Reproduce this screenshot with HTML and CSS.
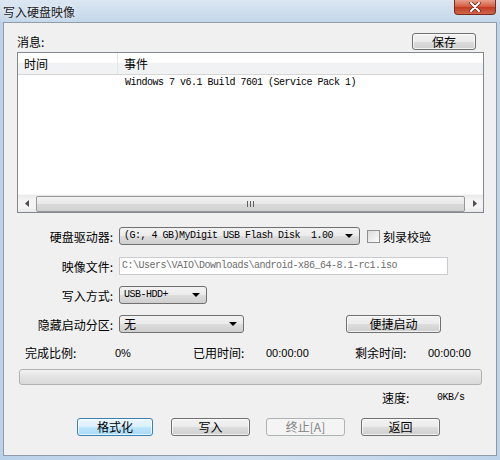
FILE: index.html
```html
<!DOCTYPE html>
<html lang="zh-CN">
<head>
  <meta charset="UTF-8">
  <title>写入硬盘映像</title>
  <link rel="stylesheet" href="styles.css">
</head>
<body>
  <div class="window">
    <div class="titlebar">
      <span class="title">写入硬盘映像</span>
      <span class="close">
        <svg width="14" height="10" viewBox="0 0 14 10">
          <path d="M3 1 L11 9 M11 1 L3 9" stroke="#5a2418" stroke-width="3.4" stroke-linecap="round"/>
          <path d="M3 1 L11 9 M11 1 L3 9" stroke="#fff" stroke-width="2" stroke-linecap="round"/>
        </svg>
      </span>
    </div>

    <div class="panel">
      <div class="log-head">
        <span>消息:</span>
        <button class="btn save">保存</button>
      </div>

      <div class="log">
        <div class="log-cols">
          <div class="col-time">时间</div>
          <div class="col-event">事件</div>
        </div>
        <div class="log-body">
          <div class="log-row">
            <div class="col-time"></div>
            <div class="col-event mono">Windows 7 v6.1 Build 7601 (Service Pack 1)</div>
          </div>
        </div>
        <div class="hscroll">
          <span class="arrow">
            <svg width="4" height="7" viewBox="0 0 4 7"><path d="M4 0 L0 3.5 L4 7 Z" fill="#4d4d4d"/></svg>
          </span>
          <span class="thumb"><span class="grip"></span></span>
          <span class="arrow">
            <svg width="4" height="7" viewBox="0 0 4 7"><path d="M0 0 L4 3.5 L0 7 Z" fill="#4d4d4d"/></svg>
          </span>
        </div>
      </div>

      <div class="form">
        <div class="row">
          <label class="lbl">硬盘驱动器:</label>
          <div class="combo mono drive">(G:, 4 GB)MyDigit USB Flash Disk  1.00<span class="caret"></span></div>
          <span class="check"></span>
          <span class="check-text">刻录校验</span>
        </div>
        <div class="row gap-12">
          <label class="lbl">映像文件:</label>
          <div class="field mono">C:\Users\VAIO\Downloads\android-x86_64-8.1-rc1.iso</div>
        </div>
        <div class="row gap-11">
          <label class="lbl">写入方式:</label>
          <div class="combo mono mode">USB-HDD+<span class="caret"></span></div>
        </div>
        <div class="row gap-11">
          <label class="lbl">隐藏启动分区:</label>
          <div class="combo hide">无<span class="caret"></span></div>
          <button class="btn quick">便捷启动</button>
        </div>
      </div>

      <div class="status">
        <span>完成比例:</span>
        <span class="num">0%</span>
        <span>已用时间:</span>
        <span class="num">00:00:00</span>
        <span>剩余时间:</span>
        <span class="num">00:00:00</span>
      </div>

      <div class="progress"></div>

      <div class="speed">
        <span>速度:</span>
        <span class="mono">0KB/s</span>
      </div>

      <div class="actions">
        <button class="btn focused">格式化</button>
        <button class="btn">写入</button>
        <button class="btn" disabled>终止[A]</button>
        <button class="btn">返回</button>
      </div>
    </div>
  </div>
</body>
</html>
```

FILE: styles.css
```css
body {
  margin: 0;
  padding: 0;
  font-family: "Noto Sans CJK SC", "Liberation Sans", sans-serif;
  font-size: 12px;
  color: #000;
}

.window {
  width: 500px;
  height: 460px;
  background: linear-gradient(90deg, #b9d1ea, #cfdff0 50%, #bcd3ea);
  overflow: hidden;
}

.titlebar {
  height: 22px;
  display: flex;
  justify-content: space-between;
  align-items: flex-start;
  background: linear-gradient(180deg, #dbe7f2, #c3d6e9);
}

.title {
  padding: 4px 0 0 3px;
  line-height: 15px;
  font-size: 12px;
  color: #1a1a1a;
  text-shadow: 0 0 6px #fff;
}

.close {
  width: 40px;
  height: 14px;
  margin-right: 4px;
  display: flex;
  align-items: center;
  justify-content: center;
  border: 1px solid #7d2c1c;
  border-top: none;
  border-radius: 0 0 4px 4px;
  background: linear-gradient(180deg, #e8a08c, #d4573d 50%, #c23b22 51%, #d0654a);
}

.panel {
  margin: 0 3px;
  height: 434px;
  box-sizing: border-box;
  border: 1px solid #8f9ba8;
  background-color: #f0f0f0;
  padding: 10px 12px 0 13px;
}

.mono {
  font-family: "Liberation Mono", monospace;
  font-size: 10px;
  letter-spacing: -0.5px;
  white-space: pre;
}

/* buttons */

.btn {
  height: 18px;
  padding: 0;
  font-family: "Noto Sans CJK SC", sans-serif;
  font-size: 12px;
  line-height: 16px;
  color: #000;
  border: 1px solid #707070;
  border-radius: 3px;
  background: linear-gradient(180deg, #f2f2f2 0%, #ebebeb 50%, #dddddd 51%, #cfcfcf 100%);
  box-shadow: inset 0 0 0 1px rgba(255,255,255,0.7);
}

.btn.focused {
  border-color: #3c7fb1;
  background: linear-gradient(180deg, #eaf6fd 0%, #d9f0fc 50%, #bee6fd 51%, #a7d9f5 100%);
}

.btn:disabled {
  border-color: #adb2b5;
  background: #f4f4f4;
  color: #838383;
  box-shadow: none;
}

/* log */

.log-head {
  height: 17px;
  display: flex;
  justify-content: space-between;
  align-items: center;
}

.save {
  width: 64px;
  height: 17px;
  margin-right: 8px;
}

.log {
  margin-top: 2px;
  height: 161px;
  box-sizing: border-box;
  border: 1px solid #828790;
  background-color: #fff;
  display: flex;
  flex-direction: column;
}

.log-cols {
  height: 21px;
  display: flex;
  border-bottom: 1px solid #d5d5d5;
  background: linear-gradient(180deg, #ffffff 0%, #ffffff 45%, #f1f2f4 46%, #f1f2f4 100%);
  line-height: 21px;
}

.col-time {
  width: 100px;
  padding-left: 6px;
  box-sizing: border-box;
}

.log-cols .col-time {
  border-right: 1px solid #e3e5e8;
}

.col-event {
  padding-left: 6px;
}

.log-body {
  flex: 1;
}

.log-row {
  display: flex;
  height: 16px;
  line-height: 16px;
}

.log-row .col-time {
  width: 101px;
}

.hscroll {
  height: 17px;
  display: flex;
  align-items: center;
  background: linear-gradient(180deg, #e9e9e9, #f4f4f4 30%, #f4f4f4 70%, #e9e9e9);
  border-top: 1px solid #f7f7f7;
}

.arrow {
  width: 17px;
  height: 17px;
  display: flex;
  align-items: center;
  justify-content: center;
}

.thumb {
  flex: 1;
  height: 14px;
  margin: 0 1px;
  border: 1px solid #979797;
  border-radius: 2px;
  background: linear-gradient(180deg, #f3f3f3, #e8e8e8 50%, #d9d9d9 51%, #d2d2d2);
  display: flex;
  justify-content: center;
  align-items: center;
}

.grip {
  width: 7px;
  height: 6px;
  background: repeating-linear-gradient(90deg, #5f5f5f 0 1px, transparent 1px 3px);
}

/* form */

.form {
  margin-top: 14px;
}

.row {
  height: 18px;
  display: flex;
  align-items: center;
  margin-top: 10px;
}

.row:first-child {
  margin-top: 0;
}

.row.gap-12 {
  margin-top: 12px;
}

.row.gap-11 {
  margin-top: 11px;
}

.lbl {
  width: 96px;
  text-align: right;
  margin-right: 6px;
}

.combo {
  position: relative;
  height: 18px;
  box-sizing: border-box;
  border: 1px solid #707070;
  border-radius: 3px;
  background: linear-gradient(180deg, #f2f2f2 0%, #ebebeb 50%, #dddddd 51%, #cfcfcf 100%);
  padding-left: 4px;
  line-height: 16px;
}

.caret {
  position: absolute;
  right: 6px;
  top: 6px;
  width: 0;
  height: 0;
  border-left: 4px solid transparent;
  border-right: 4px solid transparent;
  border-top: 4px solid #000;
}

.drive {
  width: 241px;
}

.mode {
  width: 88px;
}

.hide {
  width: 125px;
}

.check {
  width: 13px;
  height: 13px;
  box-sizing: border-box;
  margin-left: 7px;
  border: 1px solid #8e8f8f;
  background: linear-gradient(135deg, #dcdcdc, #fbfbfb);
}

.check-text {
  margin-left: 3px;
  font-size: 12px;
}

.field {
  width: 329px;
  height: 18px;
  box-sizing: border-box;
  border: 1px solid #c9cbce;
  background-color: #fff;
  color: #6d6d6d;
  padding-left: 2px;
  line-height: 16px;
}

.quick {
  width: 95px;
  margin-left: 102px;
}

/* status */

.status {
  margin-top: 13px;
  height: 14px;
  line-height: 14px;
  padding-left: 8px;
  display: grid;
  grid-template-columns: 90px 78px 73px 89px 73px auto;
}

.num {
  font-family: "Liberation Sans", sans-serif;
  font-size: 11px;
}

.progress {
  margin: 9px 0 0 2px;
  width: 463px;
  height: 16px;
  box-sizing: border-box;
  border: 1px solid #b2b2b2;
  border-radius: 3px;
  background: linear-gradient(180deg, #f2f2f2, #e3e3e3 50%, #dadada);
}

.speed {
  margin-top: 6px;
  height: 14px;
  line-height: 14px;
  padding-left: 365px;
  display: grid;
  grid-template-columns: 55px auto;
}

.actions {
  margin-top: 13px;
  padding-left: 60px;
  display: flex;
  gap: 16px;
}

.actions .btn {
  width: 79px;
}

.actions .btn.focused {
  width: 76px;
  margin-right: 2px;
}
```
